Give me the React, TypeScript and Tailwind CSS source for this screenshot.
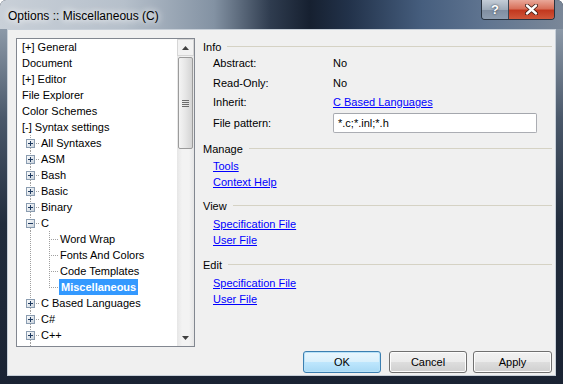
import React from 'react';

const font = "font-['Liberation_Sans',Arial,sans-serif]";

type Item = { l: number; t: string; open?: boolean; sel?: boolean; last?: boolean };

const items: Item[] = [
  { l: 0, t: '[+] General' },
  { l: 0, t: 'Document' },
  { l: 0, t: '[+] Editor' },
  { l: 0, t: 'File Explorer' },
  { l: 0, t: 'Color Schemes' },
  { l: 0, t: '[-] Syntax settings' },
  { l: 1, t: 'All Syntaxes' },
  { l: 1, t: 'ASM' },
  { l: 1, t: 'Bash' },
  { l: 1, t: 'Basic' },
  { l: 1, t: 'Binary' },
  { l: 1, t: 'C', open: true },
  { l: 2, t: 'Word Wrap' },
  { l: 2, t: 'Fonts And Colors' },
  { l: 2, t: 'Code Templates' },
  { l: 2, t: 'Miscellaneous', sel: true, last: true },
  { l: 1, t: 'C Based Languages' },
  { l: 1, t: 'C#' },
  { l: 1, t: 'C++' },
];

const dot = { stroke: '#a0a0a0', strokeDasharray: '1 1', shapeRendering: 'crispEdges' as const };

const Gutter = ({ item }: { item: Item }) => {
  if (item.l === 1) {
    return (
      <svg width="24" height="16" className="shrink-0">
        <line x1="13.5" y1="0" x2="13.5" y2="4" {...dot} />
        <line x1="13.5" y1="13" x2="13.5" y2="16" {...dot} />
        <line x1="19" y1="8.5" x2="23" y2="8.5" {...dot} />
        <defs>
          <linearGradient id="bx" x1="0" y1="0" x2="1" y2="1">
            <stop offset="0" stopColor="#ffffff" />
            <stop offset="1" stopColor="#c6d0da" />
          </linearGradient>
        </defs>
        <rect x="9.5" y="4.5" width="8" height="8" fill="url(#bx)" stroke="#8a9cb0" shapeRendering="crispEdges" />
        <line x1="11" y1="8.5" x2="16" y2="8.5" stroke="#1e3a60" shapeRendering="crispEdges" />
        {!item.open && <line x1="13.5" y1="6" x2="13.5" y2="11" stroke="#1e3a60" shapeRendering="crispEdges" />}
      </svg>
    );
  }
  return (
    <svg width="42" height="16" className="shrink-0">
      <line x1="13.5" y1="0" x2="13.5" y2="16" {...dot} />
      <line x1="32.5" y1="0" x2="32.5" y2={item.last ? 8.5 : 16} {...dot} />
      <line x1="34" y1="8.5" x2="41" y2="8.5" {...dot} />
    </svg>
  );
};

const Tree = () => (
  <div className="w-[179px] h-[309px] border border-[#828790] bg-white flex">
    <div className="flex-1 flex flex-col overflow-hidden">
      {items.map((it) => (
        <div key={it.t} className="h-[16px] flex items-center text-[11px] text-black whitespace-nowrap">
          {it.l === 0 ? (
            <span className="pl-[5px] leading-[16px]">{it.t}</span>
          ) : (
            <>
              <Gutter item={it} />
              {it.sel ? (
                <span className="bg-[#3399ff] text-white font-bold px-[2px] leading-[16px]">{it.t}</span>
              ) : (
                <span className={`leading-[16px] ${it.l === 2 ? 'pl-[1px]' : ''}`}>{it.t}</span>
              )}
            </>
          )}
        </div>
      ))}
      <div className="flex-1 flex">
        <svg width="24" height="20" className="shrink-0">
          <line x1="13.5" y1="0" x2="13.5" y2="20" {...dot} />
        </svg>
      </div>
    </div>
    <div className="w-[17px] h-full flex flex-col bg-[linear-gradient(90deg,#e6e6e6,#f3f3f3_30%,#f3f3f3_70%,#e6e6e6)]">
      <div className="h-[17px] flex items-center justify-center border border-[#d6d6d6] bg-[#f2f2f2]">
        <svg width="7" height="4"><path d="M3.5 0 L7 4 L0 4 Z" fill="#404040" /></svg>
      </div>
      <div className="mt-[1px] mx-[1px] h-[92px] rounded-[2px] border border-[#9b9b9b] bg-[linear-gradient(90deg,#f4f4f4,#e6e6e6_50%,#d4d4d4)] flex flex-col items-center justify-center gap-[1px]">
        <div className="w-[7px] h-px bg-[#6b6b6b]" />
        <div className="w-[7px] h-px bg-[#6b6b6b]" />
        <div className="w-[7px] h-px bg-[#6b6b6b]" />
        <div className="w-[7px] h-px bg-[#6b6b6b]" />
      </div>
      <div className="flex-1" />
      <div className="h-[17px] flex items-center justify-center">
        <svg width="7" height="4"><path d="M0 0 L7 0 L3.5 4 Z" fill="#404040" /></svg>
      </div>
    </div>
  </div>
);

const Header = ({ label, mt }: { label: string; mt: string }) => (
  <div className={`h-[16px] flex items-center ${mt}`}>
    <span className="text-[11px] text-black leading-[16px]">{label}</span>
    <div className="flex-1 h-px bg-[#d5d2c4] ml-[6px] mt-[-1px]" />
  </div>
);

const Prop = ({ label, children, mt = '' }: { label: string; children: React.ReactNode; mt?: string }) => (
  <div className={`h-[16px] flex items-center pl-[10px] text-[11px] text-black ${mt}`}>
    <span className="w-[120px]">{label}</span>
    {children}
  </div>
);

const Link = ({ children, mt = '' }: { children: React.ReactNode; mt?: string }) => (
  <div className={`h-[16px] flex items-center pl-[10px] text-[11px] ${mt}`}>
    <span className="text-[#0000ff] underline underline-offset-[1px]">{children}</span>
  </div>
);

const Btn = ({ label, focus, cls }: { label: string; focus?: boolean; cls: string }) => (
  <div
    className={`h-[22px] rounded-[3px] border flex items-center justify-center text-[11px] text-black ${cls} ${
      focus
        ? 'border-[#3c7fb1] bg-[linear-gradient(180deg,#eaf6fd,#d9f0fc_48%,#bee6fd_52%,#a7d9f5)] shadow-[inset_0_0_0_1px_#b8e2f8]'
        : 'border-[#707070] bg-[linear-gradient(180deg,#f2f2f2,#ebebeb_48%,#dddddd_52%,#cfcfcf)] shadow-[inset_0_0_0_1px_#fcfcfc]'
    }`}
  >
    {label}
  </div>
);

export default function App() {
  return (
    <div className={`w-[563px] h-[384px] flex flex-col overflow-hidden rounded-t-[6px] bg-[#1c2636] ${font}`}>
      {/* title bar */}
      <div className="h-[29px] flex bg-[linear-gradient(90deg,#c9d0d8_0%,#b6c0cb_22%,#8392a3_38%,#2f3c4f_48%,#162030_55%,#22324a_62%,#465e7e_75%,#5f7490_86%,#7a8798_100%)]">
        <div className="pl-[8px] pt-[8px] text-[12px] leading-[16px] text-black [text-shadow:0_0_6px_#ffffff,0_0_10px_#ffffff]">
          Options :: Miscellaneous (C)
        </div>
        <div className="flex-1" />
        <div className="flex h-[20px] mr-[8px] border border-t-0 border-[#28323f] rounded-b-[4px] overflow-hidden">
          <div className="w-[27px] h-full flex items-center justify-center bg-[linear-gradient(180deg,#c4cdd7,#9eabb9_50%,#7f8da0_52%,#8e9db0)] border-r border-[#3a4452] text-white font-bold text-[13px] [text-shadow:0_0_2px_#1e2a3a]">
            ?
          </div>
          <div className="w-[45px] h-full flex items-center justify-center bg-[linear-gradient(180deg,#e9a899,#d8705a_45%,#c2381f_55%,#d0573a)]">
            <svg width="13" height="11" viewBox="0 0 13 11">
              <path d="M2 1.5 L11 9.5 M11 1.5 L2 9.5" stroke="#3a1810" strokeWidth="4" strokeLinecap="round" />
              <path d="M2 1.5 L11 9.5 M11 1.5 L2 9.5" stroke="#ffffff" strokeWidth="2.4" strokeLinecap="round" />
            </svg>
          </div>
        </div>
      </div>

      {/* frame + client */}
      <div className="flex-1 px-[7px] pb-[8px] bg-[linear-gradient(180deg,#8c99a8_0%,#4a586a_25%,#222d3d_55%,#1a2333_100%)]">
        <div className="h-full border border-[#c7cfd8] bg-[#f0f0f0] flex flex-col">
          <div className="flex pt-[8px] pl-[8px]">
            <Tree />
            <div className="ml-[8px] w-[349px] pt-[1px] flex flex-col">
              <Header label="Info" mt="" />
              <Prop label="Abstract:">No</Prop>
              <Prop label="Read-Only:" mt="mt-[4px]">No</Prop>
              <Prop label="Inherit:" mt="mt-[3px]">
                <span className="text-[#0000ff] underline underline-offset-[1px]">C Based Languages</span>
              </Prop>
              <div className="h-[20px] mt-[3px] flex items-center pl-[10px] text-[11px] text-black">
                <span className="w-[120px]">File pattern:</span>
                <div className="w-[204px] h-[20px] bg-white border border-[#abadb3] border-t-[#a4a7ad] rounded-[2px] flex items-center pl-[4px]">
                  *.c;*.inl;*.h
                </div>
              </div>
              <Header label="Manage" mt="mt-[8px]" />
              <Link mt="mt-[1px]">Tools</Link>
              <Link>Context Help</Link>
              <Header label="View" mt="mt-[8px]" />
              <Link mt="mt-[2px]">Specification File</Link>
              <Link>User File</Link>
              <Header label="Edit" mt="mt-[9px]" />
              <Link mt="mt-[2px]">Specification File</Link>
              <Link>User File</Link>
            </div>
          </div>
          <div className="flex justify-end pr-[3px] mt-[4px]">
            <Btn label="OK" focus cls="w-[78px]" />
            <Btn label="Cancel" cls="w-[78px] ml-[8px]" />
            <Btn label="Apply" cls="w-[79px] ml-[6px]" />
          </div>
        </div>
      </div>
    </div>
  );
}
